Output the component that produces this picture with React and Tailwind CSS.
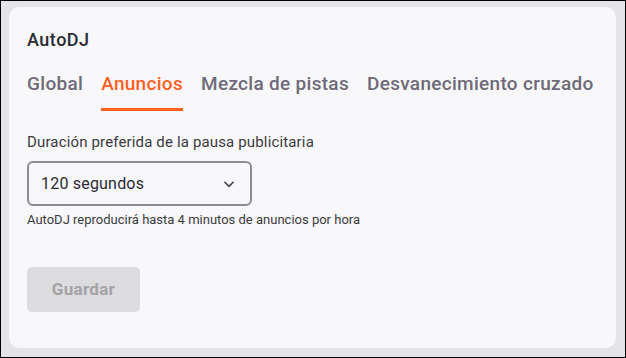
import React, { useState } from 'react'

const tabs = ['Global', 'Anuncios', 'Mezcla de pistas', 'Desvanecimiento cruzado']

export default function App() {
  const [active, setActive] = useState('Anuncios')

  return (
    <div className="w-[626px] h-[358px] border border-black bg-[#e4e3e8] pt-[6px] pl-[8px] pr-[9px] pb-[9px] font-['Roboto',sans-serif]">
      <div className="h-full rounded-[10px] bg-[#f8f8fa] px-[18px] pt-[21px]">
        <h2 className="text-[18px] leading-[24px] tracking-[0.5px] font-medium text-[#2b2a33]">AutoDJ</h2>

        <div className="mt-[20px] flex gap-[18px] whitespace-nowrap">
          {tabs.map((t) => (
            <button
              key={t}
              onClick={() => setActive(t)}
              className={
                'shrink-0 pb-[12px] border-b-[3px] text-[19px] leading-[24px] tracking-[0.3px] font-medium ' +
                (active === t
                  ? 'border-[#ff5f1f] text-[#ff5f1f]'
                  : 'border-transparent text-[#6e6a78]')
              }
            >
              {t}
            </button>
          ))}
        </div>

        <label className="mt-[21px] block text-[15px] leading-[20px] tracking-[0.15px] text-[#3b3a40]">
          Duración preferida de la pausa publicitaria
        </label>

        <div className="mt-[9px] flex h-[45px] w-[225px] items-center justify-between rounded-[6px] border-2 border-[#8d8b93] pl-[12px] pr-[14px]">
          <span className="text-[16px] tracking-[0.2px] text-[#2b2a33]">120 segundos</span>
          <svg width="14" height="14" viewBox="0 0 24 24" fill="none" stroke="#4a4952" strokeWidth="3" strokeLinecap="round" strokeLinejoin="round">
            <path d="M5 9l7 7 7-7" />
          </svg>
        </div>

        <p className="mt-[6px] text-[13px] leading-[16px] text-[#3b3a40]">
          AutoDJ reproducirá hasta 4 minutos de anuncios por hora
        </p>

        <button className="mt-[39px] h-[45px] w-[113px] rounded-[5px] bg-[#dcdbde] text-[17px] tracking-[0.3px] font-bold text-[#a3a2a7]">
          Guardar
        </button>
      </div>
    </div>
  )
}
